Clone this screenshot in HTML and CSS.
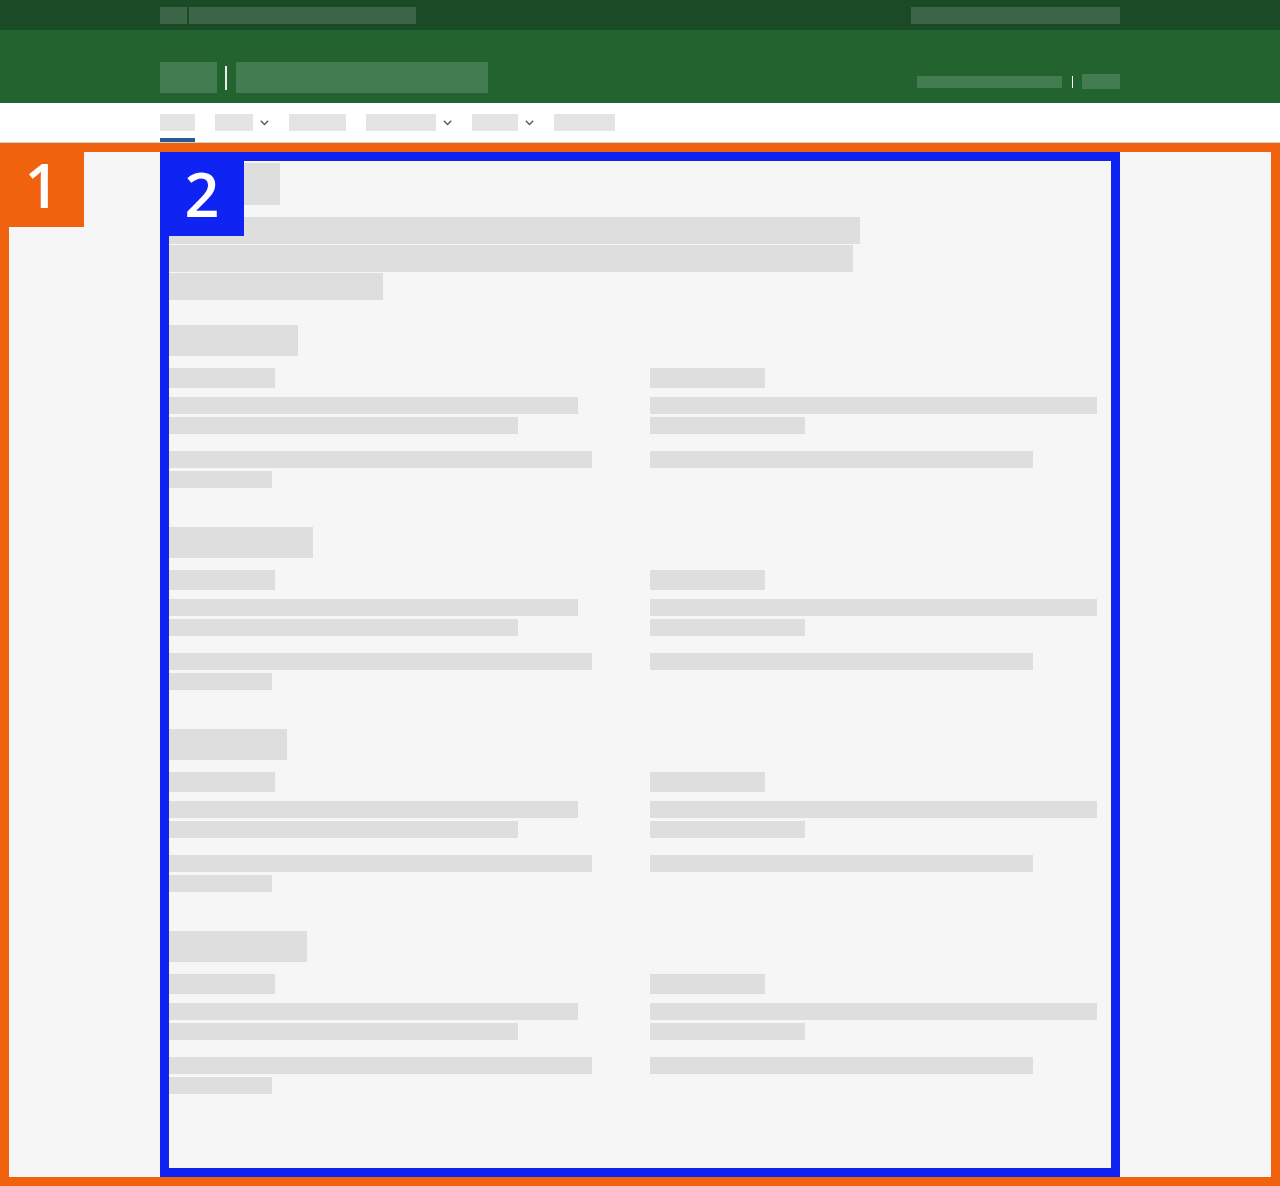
FILE: index.html
```html
<!DOCTYPE html>
<html lang="en">
<head>
<meta charset="utf-8">
<title>Page</title>
<link rel="stylesheet" href="styles.css">
</head>
<body>
<div class="topbar">
  <div class="container topbar-inner">
    <div class="topbar-left">
      <span class="tb-box tb-a"></span>
      <span class="tb-box tb-b"></span>
    </div>
    <span class="tb-box tb-c"></span>
  </div>
</div>
<header class="header">
  <div class="container header-inner">
    <div class="brand">
      <span class="hd-box logo"></span>
      <span class="brand-divider"></span>
      <span class="hd-box site-title"></span>
    </div>
    <div class="header-links">
      <span class="hd-box link-a"></span>
      <span class="link-divider"></span>
      <span class="hd-box link-b"></span>
    </div>
  </div>
</header>
<nav class="nav">
  <div class="container nav-inner">
    <div class="nav-item active"><span class="nav-box n1"></span></div>
    <div class="nav-item"><span class="nav-box n2"></span><svg class="chev" width="9" height="6" viewBox="0 0 9 6"><polyline points="0.8,0.8 4.5,4.6 8.2,0.8" fill="none" stroke="#5a5a5a" stroke-width="1.4"/></svg></div>
    <div class="nav-item"><span class="nav-box n3"></span></div>
    <div class="nav-item"><span class="nav-box n4"></span><svg class="chev" width="9" height="6" viewBox="0 0 9 6"><polyline points="0.8,0.8 4.5,4.6 8.2,0.8" fill="none" stroke="#5a5a5a" stroke-width="1.4"/></svg></div>
    <div class="nav-item"><span class="nav-box n5"></span><svg class="chev" width="9" height="6" viewBox="0 0 9 6"><polyline points="0.8,0.8 4.5,4.6 8.2,0.8" fill="none" stroke="#5a5a5a" stroke-width="1.4"/></svg></div>
    <div class="nav-item"><span class="nav-box n6"></span></div>
  </div>
</nav>
<main class="main">
  <div class="badge badge-orange">1</div>
  <div class="panel">
    <div class="badge badge-blue">2</div>
    <div class="page-title ph"></div>
    <div class="intro">
      <div class="ph intro-line i1"></div>
      <div class="ph intro-line i2"></div>
      <div class="ph intro-line i3"></div>
    </div>

    <section class="section">
      <div class="ph sec-head h1"></div>
      <div class="cols">
        <div class="col">
          <div class="ph label l-left"></div>
          <div class="group"><div class="ph line a1"></div><div class="ph line a2"></div></div>
          <div class="group"><div class="ph line a3"></div><div class="ph line a4"></div></div>
        </div>
        <div class="col">
          <div class="ph label l-right"></div>
          <div class="group"><div class="ph line b1"></div><div class="ph line b2"></div></div>
          <div class="group"><div class="ph line b3"></div></div>
        </div>
      </div>
    </section>

    <section class="section">
      <div class="ph sec-head h2"></div>
      <div class="cols">
        <div class="col">
          <div class="ph label l-left"></div>
          <div class="group"><div class="ph line a1"></div><div class="ph line a2"></div></div>
          <div class="group"><div class="ph line a3"></div><div class="ph line a4"></div></div>
        </div>
        <div class="col">
          <div class="ph label l-right"></div>
          <div class="group"><div class="ph line b1"></div><div class="ph line b2"></div></div>
          <div class="group"><div class="ph line b3"></div></div>
        </div>
      </div>
    </section>

    <section class="section">
      <div class="ph sec-head h3"></div>
      <div class="cols">
        <div class="col">
          <div class="ph label l-left"></div>
          <div class="group"><div class="ph line a1"></div><div class="ph line a2"></div></div>
          <div class="group"><div class="ph line a3"></div><div class="ph line a4"></div></div>
        </div>
        <div class="col">
          <div class="ph label l-right"></div>
          <div class="group"><div class="ph line b1"></div><div class="ph line b2"></div></div>
          <div class="group"><div class="ph line b3"></div></div>
        </div>
      </div>
    </section>

    <section class="section">
      <div class="ph sec-head h4"></div>
      <div class="cols">
        <div class="col">
          <div class="ph label l-left"></div>
          <div class="group"><div class="ph line a1"></div><div class="ph line a2"></div></div>
          <div class="group"><div class="ph line a3"></div><div class="ph line a4"></div></div>
        </div>
        <div class="col">
          <div class="ph label l-right"></div>
          <div class="group"><div class="ph line b1"></div><div class="ph line b2"></div></div>
          <div class="group"><div class="ph line b3"></div></div>
        </div>
      </div>
    </section>
  </div>
</main>
</body>
</html>
```
FILE: styles.css
```css
* { box-sizing: border-box; }
html, body { margin: 0; padding: 0; }
body {
  font-family: "Open Sans", "Noto Sans", sans-serif;
  background: #f6f6f6;
  width: 1280px;
}
.container { width: 960px; margin: 0 auto; }

/* top bar */
.topbar { background: #1b4a26; height: 30px; }
.topbar-inner { height: 30px; display: flex; align-items: center; justify-content: space-between; }
.topbar-left { display: flex; gap: 2px; }
.tb-box { display: block; height: 17px; background: #3d6649; }
.tb-a { width: 27px; }
.tb-b { width: 227px; }
.tb-c { width: 209px; }

/* header */
.header { background: #236330; height: 73px; }
.header-inner { height: 73px; display: flex; justify-content: space-between; align-items: flex-end; padding-bottom: 10px; }
.brand { display: flex; align-items: center; }
.hd-box { display: block; background: #447c52; }
.logo { width: 57px; height: 31px; }
.brand-divider { width: 2px; height: 24px; background: #e6eee7; margin: 0 9px 0 8px; }
.site-title { width: 252px; height: 31px; }
.header-links { display: flex; align-items: center; margin-bottom: 4px; }
.link-a { width: 145px; height: 12px; }
.link-divider { width: 1px; height: 12px; background: #ffffff; margin: 0 9px 0 10px; }
.link-b { width: 38px; height: 15px; }

/* nav */
.nav { background: #ffffff; height: 40px; border-bottom: 1px solid #d2d2d2; }
.nav-inner { display: flex; gap: 20px; height: 39px; }
.nav-item { height: 39px; padding-top: 11px; display: flex; align-items: flex-start; }
.nav-item.active { border-bottom: 4px solid #285a94; }
.nav-box { display: block; height: 17px; background: #e4e4e4; }
.n1 { width: 35px; }
.n2 { width: 38px; }
.n3 { width: 57px; }
.n4 { width: 70px; }
.n5 { width: 46px; }
.n6 { width: 61px; }
.chev { display: block; margin: 6px 0 0 7px; }

/* main frame */
.main {
  position: relative;
  height: 1043px;
  border: 9px solid #f1620f;
  background: #f6f6f6;
}
.panel {
  position: relative;
  width: 960px;
  height: 100%;
  margin: 0 auto;
  border: 9px solid #0f23f2;
  padding-top: 2px;
}
.badge {
  position: absolute;
  top: -9px;
  left: -9px;
  width: 84px;
  height: 84px;
  color: #ffffff;
  font-family: "Open Sans", "Noto Sans", sans-serif;
  font-weight: 600;
  font-size: 61px;
  line-height: 84px;
  text-align: center;
  z-index: 2;
}
.badge-orange { background: #f1620f; }
.badge-blue { background: #0f23f2; }

.ph { background: #dedede; }
.page-title { width: 111px; height: 42px; }
.intro { margin-top: 12px; display: flex; flex-direction: column; gap: 1px; }
.intro-line { height: 27px; }
.i1 { width: 691px; }
.i2 { width: 684px; }
.i3 { width: 214px; }

.section { margin-top: 25px; }
.section + .section { margin-top: 39.5px; }
.sec-head { height: 31px; }
.h1 { width: 129px; }
.h2 { width: 144px; }
.h3 { width: 118px; }
.h4 { width: 138px; }

.cols { display: grid; grid-template-columns: 461px 461px; column-gap: 20px; margin-top: 12px; }
.col { display: flex; flex-direction: column; }
.label { height: 20px; margin-bottom: 9px; }
.l-left { width: 106px; }
.l-right { width: 115px; }
.group { display: flex; flex-direction: column; gap: 3px; }
.group + .group { margin-top: 16.5px; }
.line { height: 17px; }
.a1 { width: 409px; }
.a2 { width: 349px; }
.a3 { width: 423px; }
.a4 { width: 103px; }
.b1 { width: 447px; }
.b2 { width: 155px; }
.b3 { width: 383px; }
```
